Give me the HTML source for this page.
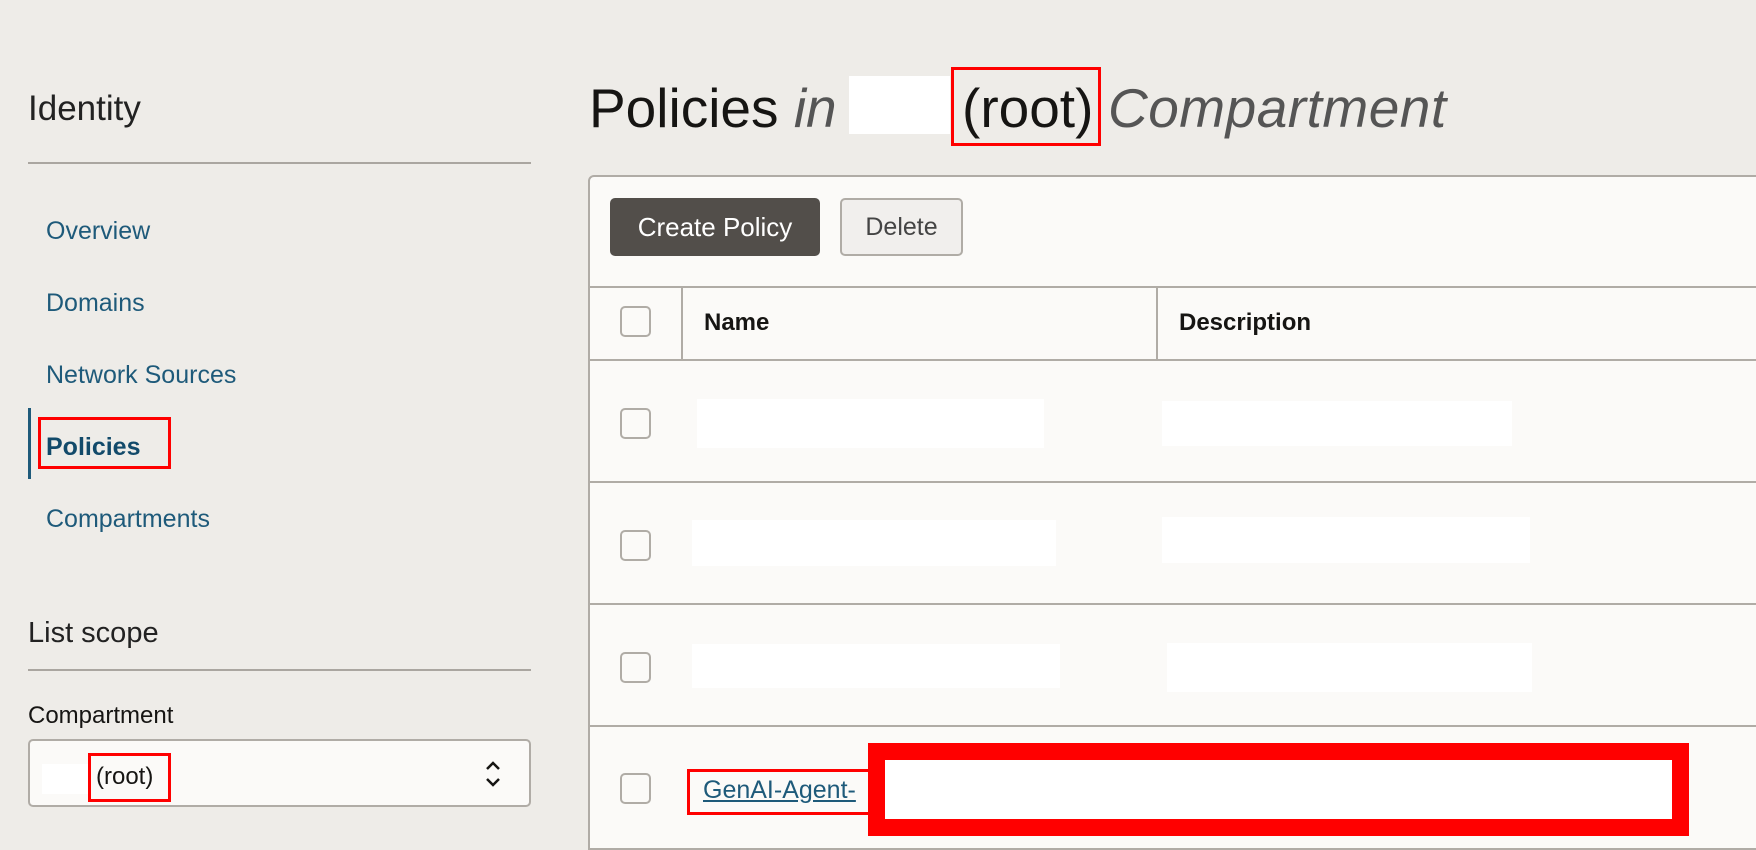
<!DOCTYPE html>
<html style="overflow:hidden;height:850px"><head><style>
*{margin:0;padding:0;box-sizing:border-box}
body{width:1756px;height:850px;overflow:hidden;background:#eeece8;font-family:"Liberation Sans",Arial,sans-serif;position:relative}
.a{position:absolute}
.nav{position:absolute;left:46px;font-size:25px;color:#1e5a7a}
.line{position:absolute;left:28px;width:503px;height:2px;background:#aaa6a0}
.cb{position:absolute;left:620px;width:31px;height:31px;border:2px solid #b0aca6;border-radius:5px;background:#fbfaf8}
.row{position:absolute;left:589px;right:0;height:2px;background:#b0aca6}
.w{position:absolute;background:#fff}
.rb{position:absolute;border:3px solid #f00}
</style></head><body>
<div class="a" style="left:28px;top:89px;font-size:35px;color:#222;font-weight:300">Identity</div>
<div class="line" style="top:162px"></div>
<div class="nav" style="top:217px">Overview</div>
<div class="nav" style="top:289px">Domains</div>
<div class="nav" style="top:361px">Network Sources</div>
<div class="a" style="left:28px;top:408px;width:3px;height:71px;background:#1e5a7a"></div>
<div class="nav" style="top:433px;font-weight:bold;color:#124a6a">Policies</div>
<div class="rb" style="left:38px;top:417px;width:133px;height:52px"></div>
<div class="nav" style="top:505px">Compartments</div>
<div class="a" style="left:28px;top:617px;font-size:29px;color:#222">List scope</div>
<div class="line" style="top:669px"></div>
<div class="a" style="left:28px;top:702px;font-size:24px;color:#161513">Compartment</div>
<div class="a" style="left:28px;top:739px;width:503px;height:68px;border:2px solid #b0aca6;border-radius:5px;background:#fbfaf8"></div>
<div class="w" style="left:42px;top:764px;width:46px;height:30px"></div>
<div class="a" style="left:96px;top:763px;font-size:24px;color:#161513">(root)</div>
<div class="rb" style="left:88px;top:753px;width:83px;height:49px"></div>
<svg class="a" style="left:483px;top:758px" width="20" height="32"><path d="M4 11 L10 5 L16 11 M4 21 L10 27 L16 21" stroke="#161513" stroke-width="2.5" fill="none"/></svg>

<div class="a" style="left:589px;top:76px;font-size:55px;color:#161513;white-space:nowrap">Policies <i style="color:#555">in</i></div>
<div class="w" style="left:849px;top:76px;width:101px;height:58px"></div>
<div class="a" style="left:962px;top:76px;font-size:55px;color:#161513">(root)</div>
<div class="rb" style="left:951px;top:67px;width:150px;height:79px"></div>
<div class="a" style="left:1108px;top:76px;font-size:55px;color:#555;font-style:italic;letter-spacing:0.5px">Compartment</div>

<div class="a" style="left:588px;top:175px;width:1180px;height:690px;border:2px solid #b0aca6;border-radius:6px;background:#fbfaf8"></div>
<div class="a" style="left:610px;top:198px;width:210px;height:58px;background:#524e4a;border-radius:5px;color:#fff;font-size:26px;line-height:58px;text-align:center">Create Policy</div>
<div class="a" style="left:840px;top:198px;width:123px;height:58px;background:#f1efed;border:2px solid #b0aca6;border-radius:5px;color:#444;font-size:25px;line-height:54px;text-align:center">Delete</div>
<div class="row" style="top:286px"></div>
<div class="row" style="top:359px"></div>
<div class="a" style="left:681px;top:287px;width:2px;height:73px;background:#b0aca6"></div>
<div class="a" style="left:1156px;top:287px;width:2px;height:73px;background:#b0aca6"></div>
<div class="cb" style="top:306px"></div>
<div class="a" style="left:704px;top:309px;font-size:24px;font-weight:bold;color:#161513">Name</div>
<div class="a" style="left:1179px;top:309px;font-size:24px;font-weight:bold;color:#161513">Description</div>

<div class="cb" style="top:408px"></div>
<div class="w" style="left:697px;top:399px;width:347px;height:49px"></div>
<div class="w" style="left:1162px;top:401px;width:350px;height:45px"></div>
<div class="row" style="top:481px"></div>
<div class="cb" style="top:530px"></div>
<div class="w" style="left:692px;top:520px;width:364px;height:46px"></div>
<div class="w" style="left:1162px;top:517px;width:368px;height:46px"></div>
<div class="row" style="top:603px"></div>
<div class="cb" style="top:652px"></div>
<div class="w" style="left:692px;top:644px;width:368px;height:44px"></div>
<div class="w" style="left:1167px;top:643px;width:365px;height:49px"></div>
<div class="row" style="top:725px"></div>
<div class="cb" style="top:773px"></div>
<div class="a" style="left:703px;top:776px;font-size:25px;color:#1e5a7a;text-decoration:underline;white-space:nowrap">GenAI-Agent-</div>
<div class="rb" style="left:687px;top:769px;width:187px;height:46px"></div>
<div class="a" style="left:868px;top:743px;width:821px;height:93px;border:17px solid #f00;background:#fff"></div>
<div class="row" style="top:848px"></div>
</body></html>
